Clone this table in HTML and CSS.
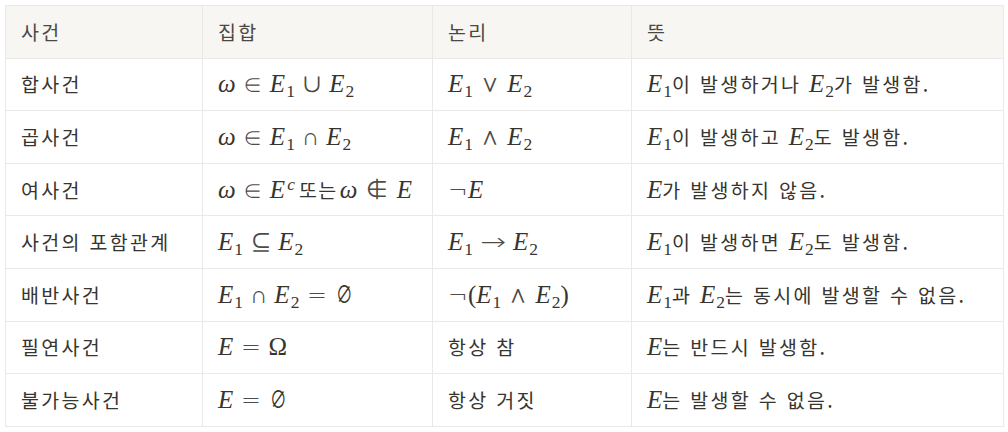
FILE: index.html
```html
<!DOCTYPE html>
<html lang="ko">
<head>
<meta charset="utf-8">
<link rel="stylesheet" href="styles.css">
</head>
<body>
<table class="tbl">
  <colgroup>
    <col class="c1"><col class="c2"><col class="c3"><col class="c4">
  </colgroup>
  <thead>
    <tr><th>사건</th><th>집합</th><th>논리</th><th>뜻</th></tr>
  </thead>
  <tbody>
    <tr>
      <td>합사건</td>
      <td><span class="m"><i>ω</i><span class="op rel">∈</span><i>E</i><sub>1</sub><span class="op bin">∪</span><i>E</i><sub>2</sub></span></td>
      <td><span class="m"><i>E</i><sub>1</sub><span class="op bin">∨</span><i>E</i><sub>2</sub></span></td>
      <td><span class="m"><i>E</i><sub>1</sub></span>이 발생하거나 <span class="m"><i>E</i><sub>2</sub></span>가 발생함.</td>
    </tr>
    <tr>
      <td>곱사건</td>
      <td><span class="m"><i>ω</i><span class="op rel">∈</span><i>E</i><sub>1</sub><span class="op bin">∩</span><i>E</i><sub>2</sub></span></td>
      <td><span class="m"><i>E</i><sub>1</sub><span class="op bin">∧</span><i>E</i><sub>2</sub></span></td>
      <td><span class="m"><i>E</i><sub>1</sub></span>이 발생하고 <span class="m"><i>E</i><sub>2</sub></span>도 발생함.</td>
    </tr>
    <tr>
      <td>여사건</td>
      <td><span class="m"><i>ω</i><span class="op rel">∈</span><i>E</i><sup>c</sup><span class="txt">또는</span><i>ω</i><span class="op rel">∉</span><i>E</i></span></td>
      <td><span class="m"><span class="op">¬</span><i>E</i></span></td>
      <td><span class="m"><i>E</i></span>가 발생하지 않음.</td>
    </tr>
    <tr>
      <td>사건의 포함관계</td>
      <td><span class="m"><i>E</i><sub>1</sub><span class="op rel">⊆</span><i>E</i><sub>2</sub></span></td>
      <td><span class="m"><i>E</i><sub>1</sub><span class="op rel arrow">→</span><i>E</i><sub>2</sub></span></td>
      <td><span class="m"><i>E</i><sub>1</sub></span>이 발생하면 <span class="m"><i>E</i><sub>2</sub></span>도 발생함.</td>
    </tr>
    <tr>
      <td>배반사건</td>
      <td><span class="m"><i>E</i><sub>1</sub><span class="op bin">∩</span><i>E</i><sub>2</sub><span class="op rel">=</span><span class="empty">∅</span></span></td>
      <td><span class="m"><span class="op">¬</span>(<i>E</i><sub>1</sub><span class="op bin">∧</span><i>E</i><sub>2</sub>)</span></td>
      <td><span class="m"><i>E</i><sub>1</sub></span>과 <span class="m"><i>E</i><sub>2</sub></span>는 동시에 발생할 수 없음.</td>
    </tr>
    <tr>
      <td>필연사건</td>
      <td><span class="m"><i>E</i><span class="op rel">=</span>Ω</span></td>
      <td>항상 참</td>
      <td><span class="m"><i>E</i></span>는 반드시 발생함.</td>
    </tr>
    <tr>
      <td>불가능사건</td>
      <td><span class="m"><i>E</i><span class="op rel">=</span><span class="empty">∅</span></span></td>
      <td>항상 거짓</td>
      <td><span class="m"><i>E</i></span>는 발생할 수 없음.</td>
    </tr>
  </tbody>
</table>
</body>
</html>
```

FILE: styles.css
```css
html, body {
  margin: 0;
  padding: 0;
  background: #ffffff;
}
body {
  padding: 5px 0 0 5px;
  font-family: "Noto Sans CJK KR", "Noto Sans", sans-serif;
  font-size: 19.5px;
  color: #37352f;
}
.tbl {
  border-collapse: collapse;
  table-layout: fixed;
  width: 998px;
}
.c1 { width: 197px; }
.c2 { width: 230px; }
.c3 { width: 199px; }
.c4 { width: 372px; }
.tbl th,
.tbl td {
  border: 1px solid #e9e9e7;
  height: 51.6px;
  padding: 0 15px;
  line-height: 24px;
  text-align: left;
  vertical-align: middle;
  white-space: nowrap;
  font-weight: 400;
  letter-spacing: 2.3px;
}
.tbl thead th {
  background: #f7f6f3;
  color: #4a4843;
}
.m {
  font-family: "Liberation Serif", "DejaVu Serif", serif;
  font-size: 25px;
  line-height: 24px;
  letter-spacing: 0;
}
.m i {
  font-style: italic;
}
.m sub {
  font-size: 0.7em;
  vertical-align: -0.28em;
  line-height: 0;
  margin-left: 1px;
}
.m sup {
  font-size: 0.7em;
  font-style: italic;
  vertical-align: 0.45em;
  line-height: 0;
  margin-left: 2px;
}
.txt {
  font-family: "Noto Sans CJK KR", "Noto Sans", sans-serif;
  font-size: 19.5px;
  letter-spacing: 1.5px;
  margin: 0 2px 0 4px;
}
.op {
  font-family: "DejaVu Sans", sans-serif;
  font-weight: 200;
  font-size: 0.95em;
  color: #4e4c47;
}
.rel {
  margin: 0 0.32em;
}
.bin {
  margin: 0 0.3em;
}
.arrow {
  display: inline-block;
  transform: scaleX(1.3);
  margin: 0 0.42em;
}
.empty {
  display: inline-block;
  font-family: "DejaVu Sans", sans-serif;
  font-weight: 200;
  font-size: 0.95em;
  transform: scaleX(0.7);
  margin: 0 -0.1em;
}
```
